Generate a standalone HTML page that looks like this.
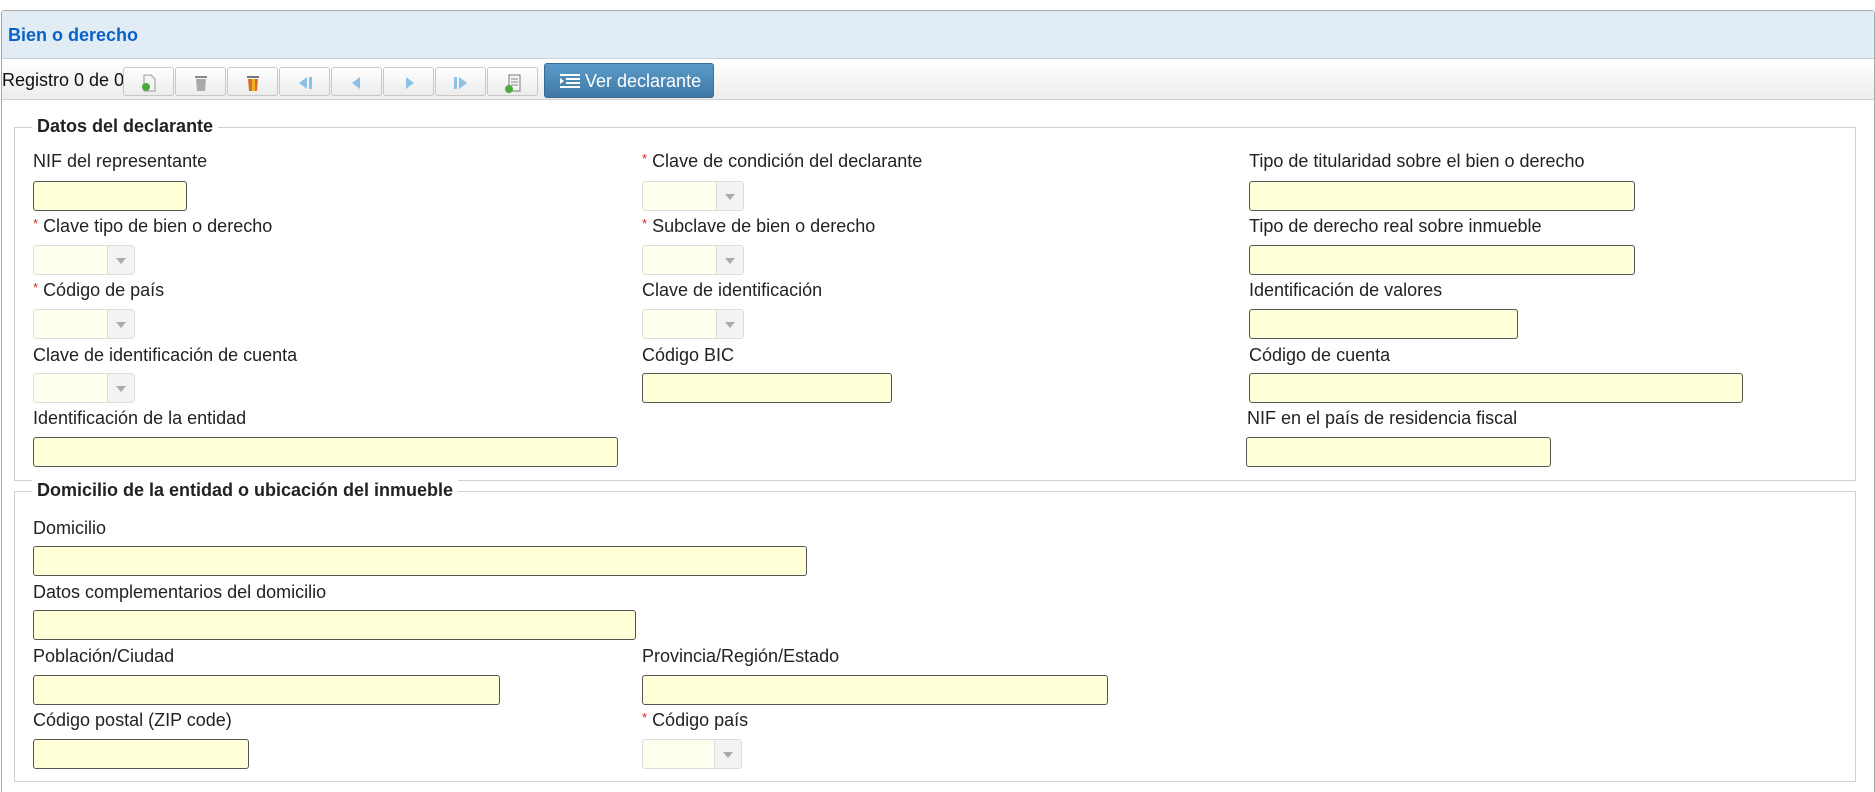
<!DOCTYPE html>
<html><head><meta charset="utf-8"><style>
*{box-sizing:border-box}
body{margin:0;width:1875px;height:792px;background:#fff;font-family:"Liberation Sans",Arial,sans-serif;color:#222;position:relative;overflow:hidden}
.abs{position:absolute}
.panel{left:1px;top:10px;width:1874px;height:782px;border:1px solid #a8a8a8;border-bottom:none;border-radius:3px 3px 0 0}
.hdr{left:2px;top:11px;width:1872px;height:48px;background:#e1ecf5;border-bottom:1px solid #c5d2dc}
.title{left:8px;top:25px;font-size:18px;font-weight:bold;color:#0a62c9}
.tb{left:2px;top:60px;width:1872px;height:40px;background:linear-gradient(#fff,#ededed);border-bottom:1px solid #d0d0d0}
.reg{left:2px;top:70px;font-size:18px;color:#111}
.btn{top:67px;width:51px;height:29px;border:1px solid #c8c8c8;border-radius:3px;background:linear-gradient(#fff,#ececec)}
.btn svg{position:absolute;left:15px;top:5px}
.ver{left:544px;top:63px;width:170px;height:35px;border-radius:3px;background:linear-gradient(#5b9bc9,#3f78a6);border:1px solid #3a6d96;color:#fff;font-size:18px;padding:7px 0 0 40px}
.fs{border:1px solid #d0d0d0}
.lg{font-size:18px;font-weight:bold;background:#fff;padding:0 5px;color:#222}
.lb{font-size:18px;color:#222}
.lb i{color:#d22;font-style:normal;font-size:13px;vertical-align:4px;margin-right:5px}
.in{height:30px;background:#ffffd8;border:1px solid #555;border-radius:3px}
.sel{width:102px;height:30px;background:#fffff0;border:1px solid #ddd;border-radius:3px}
.sel:after{content:"";position:absolute;right:0;top:0;width:26px;height:28px;background:#f3f3f3;border-left:1px solid #ddd}
.sel:before{content:"";position:absolute;right:8px;top:12px;border:5px solid transparent;border-top:6px solid #aaa;z-index:2}
</style></head><body>
<div class="abs panel"></div>
<div class="abs hdr"></div>
<div class="abs title">Bien o derecho</div>
<div class="abs tb"></div>
<div class="abs reg">Registro 0 de 0</div>
<div class="abs btn" style="left:123px"><svg width="20" height="20"><path d="M5 2h7l4 4v12H5z" fill="#f4f4f4" stroke="#999"/><circle cx="7" cy="14" r="4" fill="#4caa3c"/></svg></div>
<div class="abs btn" style="left:175px"><svg width="20" height="20"><rect x="4" y="3" width="12" height="2" fill="#888"/><path d="M5 6h10l-1 12H6z" fill="#aaa"/></svg></div>
<div class="abs btn" style="left:227px"><svg width="20" height="20"><rect x="4" y="3" width="12" height="2" fill="#777"/><path d="M5 6h10l-1 12H6z" fill="#d96a2a"/><rect x="9" y="6" width="3" height="12" fill="#f0b020"/></svg></div>
<div class="abs btn" style="left:279px"><svg width="20" height="20"><path d="M12 4v12L4 10z" fill="#8cc0e6"/><rect x="14" y="4" width="3" height="12" fill="#8cc0e6"/></svg></div>
<div class="abs btn" style="left:331px"><svg width="20" height="20"><path d="M13 4v12L5 10z" fill="#8cc0e6"/></svg></div>
<div class="abs btn" style="left:383px"><svg width="20" height="20"><path d="M7 4v12l8-6z" fill="#8cc0e6"/></svg></div>
<div class="abs btn" style="left:435px"><svg width="20" height="20"><rect x="3" y="4" width="3" height="12" fill="#8cc0e6"/><path d="M8 4v12l8-6z" fill="#8cc0e6"/></svg></div>
<div class="abs btn" style="left:487px"><svg width="20" height="22"><rect x="6" y="2" width="11" height="16" fill="#f4f4f4" stroke="#777"/><path d="M8 6h7M8 9h7M8 12h7" stroke="#888"/><circle cx="6" cy="16" r="4" fill="#4caa3c"/></svg></div>
<div class="abs ver"><svg class="abs" style="left:15px;top:10px" width="20" height="14"><path d="M0 1h20M6 5h14M6 9h14M0 13h20" stroke="#fff" stroke-width="2"/><path d="M0 4l4 3-4 3z" fill="#fff"/></svg>Ver declarante</div>

<div class="abs fs" style="left:14px;top:127px;width:1842px;height:354px"></div>
<div class="abs lg" style="left:32px;top:116px">Datos del declarante</div>

<div class="abs lb" style="left:33px;top:151px">NIF del representante</div>
<div class="abs in" style="left:33px;top:181px;width:154px"></div>
<div class="abs lb" style="left:642px;top:151px"><i>*</i>Clave de condición del declarante</div>
<div class="abs sel" style="left:642px;top:181px"></div>
<div class="abs lb" style="left:1249px;top:151px">Tipo de titularidad sobre el bien o derecho</div>
<div class="abs in" style="left:1249px;top:181px;width:386px"></div>

<div class="abs lb" style="left:33px;top:216px"><i>*</i>Clave tipo de bien o derecho</div>
<div class="abs sel" style="left:33px;top:245px"></div>
<div class="abs lb" style="left:642px;top:216px"><i>*</i>Subclave de bien o derecho</div>
<div class="abs sel" style="left:642px;top:245px"></div>
<div class="abs lb" style="left:1249px;top:216px">Tipo de derecho real sobre inmueble</div>
<div class="abs in" style="left:1249px;top:245px;width:386px"></div>

<div class="abs lb" style="left:33px;top:280px"><i>*</i>Código de país</div>
<div class="abs sel" style="left:33px;top:309px"></div>
<div class="abs lb" style="left:642px;top:280px">Clave de identificación</div>
<div class="abs sel" style="left:642px;top:309px"></div>
<div class="abs lb" style="left:1249px;top:280px">Identificación de valores</div>
<div class="abs in" style="left:1249px;top:309px;width:269px"></div>

<div class="abs lb" style="left:33px;top:345px">Clave de identificación de cuenta</div>
<div class="abs sel" style="left:33px;top:373px"></div>
<div class="abs lb" style="left:642px;top:345px">Código BIC</div>
<div class="abs in" style="left:642px;top:373px;width:250px"></div>
<div class="abs lb" style="left:1249px;top:345px">Código de cuenta</div>
<div class="abs in" style="left:1249px;top:373px;width:494px"></div>

<div class="abs lb" style="left:33px;top:408px">Identificación de la entidad</div>
<div class="abs in" style="left:33px;top:437px;width:585px"></div>
<div class="abs lb" style="left:1247px;top:408px">NIF en el país de residencia fiscal</div>
<div class="abs in" style="left:1246px;top:437px;width:305px"></div>

<div class="abs fs" style="left:14px;top:491px;width:1842px;height:291px"></div>
<div class="abs lg" style="left:32px;top:480px">Domicilio de la entidad o ubicación del inmueble</div>

<div class="abs lb" style="left:33px;top:518px">Domicilio</div>
<div class="abs in" style="left:33px;top:546px;width:774px"></div>
<div class="abs lb" style="left:33px;top:582px">Datos complementarios del domicilio</div>
<div class="abs in" style="left:33px;top:610px;width:603px"></div>
<div class="abs lb" style="left:33px;top:646px">Población/Ciudad</div>
<div class="abs in" style="left:33px;top:675px;width:467px"></div>
<div class="abs lb" style="left:642px;top:646px">Provincia/Región/Estado</div>
<div class="abs in" style="left:642px;top:675px;width:466px"></div>
<div class="abs lb" style="left:33px;top:710px">Código postal (ZIP code)</div>
<div class="abs in" style="left:33px;top:739px;width:216px"></div>
<div class="abs lb" style="left:642px;top:710px"><i>*</i>Código país</div>
<div class="abs sel" style="left:642px;top:739px;width:100px"></div>
</body></html>
